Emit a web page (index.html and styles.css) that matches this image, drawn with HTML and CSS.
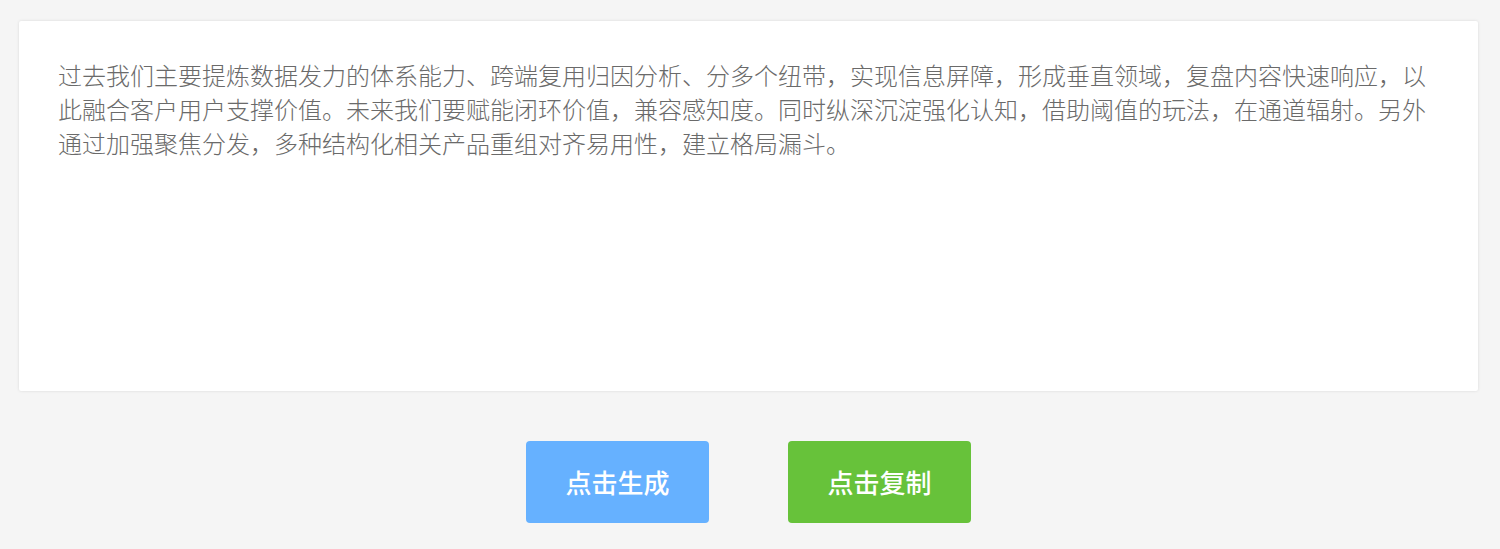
FILE: index.html
```html
<!DOCTYPE html>
<html lang="zh-CN">
<head>
    <meta charset="UTF-8">
    <meta name="viewport" content="width=device-width, initial-scale=1.0">
    <title>文案生成</title>
    <link rel="stylesheet" href="styles.css">
</head>
<body>
    <div class="page">
        <div class="result-box">
            <p>过去我们主要提炼数据发力的体系能力、跨端复用归因分析、分多个纽带，实现信息屏障，形成垂直领域，复盘内容快速响应，以此融合客户用户支撑价值。未来我们要赋能闭环价值，兼容感知度。同时纵深沉淀强化认知，借助阈值的玩法，在通道辐射。另外通过加强聚焦分发，多种结构化相关产品重组对齐易用性，建立格局漏斗。</p>
        </div>
        <div class="actions">
            <button class="btn btn-blue">点击生成</button>
            <button class="btn btn-green">点击复制</button>
        </div>
    </div>
</body>
</html>
```

FILE: styles.css
```css
/* 基础样式 */
body {
    margin: 0;
    background-color: #f5f5f5;
    font-family: "Noto Sans CJK SC", "Noto Sans", sans-serif;
}

.page {
    padding: 21px 22px 0 19px;
}

/* 结果文本框 */
.result-box {
    background-color: #ffffff;
    height: 370px;
    box-sizing: border-box;
    padding: 37px 39px;
    box-shadow: 0 0 3px rgba(0, 0, 0, 0.12);
    border-radius: 2px;
}

.result-box p {
    margin: 0;
    font-size: 24px;
    font-weight: 300;
    line-height: 34px;
    color: #6a6a6a;
}

/* 按钮区域 */
.actions {
    display: flex;
    justify-content: center;
    gap: 79px;
    margin-top: 50px;
}

.btn {
    width: 183px;
    height: 82px;
    border: none;
    border-radius: 4px;
    color: #ffffff;
    font-family: inherit;
    font-size: 26px;
    font-weight: 500;
    padding: 0 0 2px;
    cursor: pointer;
}

.btn-blue {
    background-color: #66b1ff;
}

.btn-green {
    background-color: #67c23a;
}
```
